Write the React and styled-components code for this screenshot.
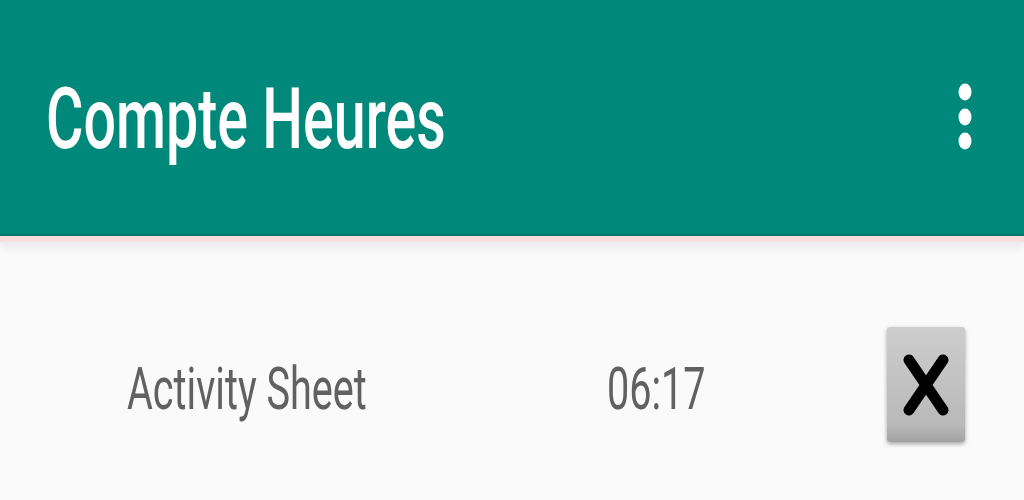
import React from 'react';
import styled, { createGlobalStyle } from 'styled-components';

const GlobalStyle = createGlobalStyle`
  html, body {
    margin: 0;
    padding: 0;
    background: #fafafa;
    font-family: Roboto, "Liberation Sans", sans-serif;
    overflow: hidden;
  }
`;

const Page = styled.div`
  width: 1024px;
  height: 500px;
  background: #fafafa;
  display: flex;
  flex-direction: column;
`;

const AppBar = styled.header`
  height: 234px;
  flex-shrink: 0;
  background: #00897b;
  display: flex;
  align-items: center;
  justify-content: space-between;
  padding: 0 47px 0 46px;
  border-bottom: 2px solid #00766a;
  box-shadow: 0 6px 0 #f7dfe0, 0 12px 8px rgba(0, 0, 0, 0.06);
  position: relative;
  z-index: 1;
`;

// the screenshot is squashed horizontally, so text is narrowed to match
const Squash = styled.span`
  display: inline-block;
  transform: scaleX(${p => p.$x || 0.66});
  transform-origin: left center;
  white-space: nowrap;
`;

const Title = styled.h1`
  margin: 0;
  color: #ffffff;
  font-size: 85px;
  font-weight: 500;
  line-height: 1;
  margin-top: 4px;
`;

const MenuButton = styled.div`
  width: 24px;
  display: flex;
  justify-content: center;
`;

const Content = styled.main`
  flex: 1;
  padding-top: 91px;
`;

const Row = styled.div`
  display: grid;
  grid-template-columns: 480px 280px 78px;
  align-items: center;
  padding-left: 127px;
`;

const Cell = styled.div`
  color: #616161;
  font-size: 60px;
  line-height: 1;
  margin-top: 8px;
`;

const CloseButton = styled.button`
  width: 78px;
  height: 115px;
  border: none;
  border-radius: 3px;
  background: linear-gradient(#cdcdcd, #b9b9b9 85%, #a3a3a3);
  box-shadow: 0 2px 4px rgba(0, 0, 0, 0.35);
  display: flex;
  align-items: center;
  justify-content: center;
  padding: 0;
`;

const Dots = () => (
  <svg width="14" height="68" viewBox="0 0 14 68">
    <ellipse cx="7" cy="9" rx="6.5" ry="8.5" fill="#fff" />
    <ellipse cx="7" cy="34" rx="6.5" ry="8.5" fill="#fff" />
    <ellipse cx="7" cy="58" rx="6.5" ry="8.5" fill="#fff" />
  </svg>
);

const Cross = () => (
  <svg width="46" height="62" viewBox="0 0 46 62">
    <path d="M6 6 L40 56 M40 6 L6 56" stroke="#000" strokeWidth="11" strokeLinecap="round" />
  </svg>
);

export default function App() {
  return (
    <Page>
      <GlobalStyle />
      <AppBar>
        <Title><Squash $x={0.675}>Compte Heures</Squash></Title>
        <MenuButton><Dots /></MenuButton>
      </AppBar>
      <Content>
        <Row>
          <Cell><Squash>Activity Sheet</Squash></Cell>
          <Cell><Squash>06:17</Squash></Cell>
          <CloseButton aria-label="Delete"><Cross /></CloseButton>
        </Row>
      </Content>
    </Page>
  );
}
